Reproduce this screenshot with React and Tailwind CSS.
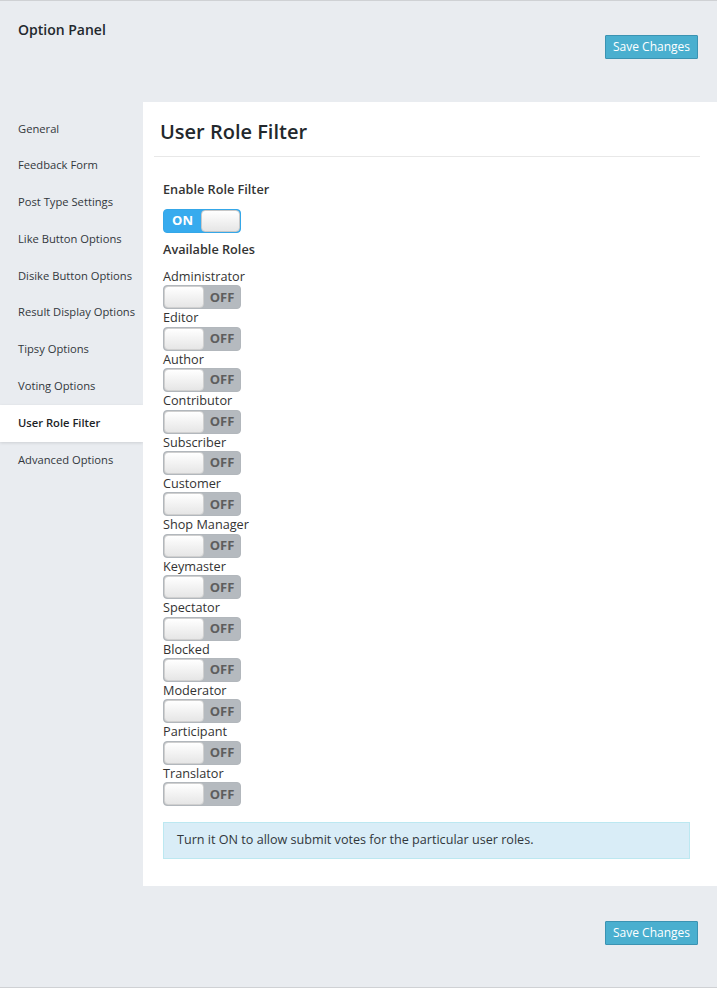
import React from 'react';

const menu = [
    'General',
    'Feedback Form',
    'Post Type Settings',
    'Like Button Options',
    'Disike Button Options',
    'Result Display Options',
    'Tipsy Options',
    'Voting Options',
    'User Role Filter',
    'Advanced Options',
];

const roles = [
    'Administrator',
    'Editor',
    'Author',
    'Contributor',
    'Subscriber',
    'Customer',
    'Shop Manager',
    'Keymaster',
    'Spectator',
    'Blocked',
    'Moderator',
    'Participant',
    'Translator',
];

const Toggle = ({ on }) => (
    <div
        className={`flex h-[24px] w-[78px] items-stretch overflow-hidden rounded-[4px] border ${
            on ? 'border-[#35a7e8] bg-[#37abee]' : 'border-[#b2b7bc] bg-[#b5babf]'
        }`}
    >
        {on ? (
            <>
                <span className="flex w-[37px] items-center justify-center text-[13px] font-bold text-white">ON</span>
                <span className="flex-1 rounded-[4px] border border-[#c8c8c8] bg-gradient-to-b from-white to-[#e6e6e6]" />
            </>
        ) : (
            <>
                <span className="w-[40px] rounded-[4px] border border-[#d0d0d0] bg-gradient-to-b from-white to-[#e6e6e6]" />
                <span className="flex flex-1 items-center justify-center text-[13px] font-bold text-[#5e5e5e]">OFF</span>
            </>
        )}
    </div>
);

const SaveButton = () => (
    <button className="block h-[24px] w-[93px] rounded-[1px] border border-[#3b93b2] bg-[#4aafcf] text-[12px] leading-[22px] text-white">
        Save Changes
    </button>
);

export default function App() {
    return (
        <div
            className="flex h-[988px] flex-col border-y border-[#cfd1d4] bg-[#e9ecf0] text-[#23282d]"
            style={{ fontFamily: '"Open Sans", "Noto Sans", sans-serif' }}
        >
            <div className="flex h-[101px] items-start justify-between pl-[18px] pr-[19px]">
                <h1 className="mt-[19px] text-[14px] font-semibold leading-[20px]">Option Panel</h1>
                <div className="mt-[34px] flex">
                    <SaveButton />
                </div>
            </div>

            <div className="flex h-[784px]">
                <ul className="w-[143px] pt-[8.5px]">
                    {menu.map((item) => {
                        const active = item === 'User Role Filter';
                        return (
                            <li
                                key={item}
                                className={`flex h-[36.8px] items-center pl-[18px] text-[11.2px] ${
                                    active ? 'bg-white font-semibold text-[#1d2327] shadow-[0_1px_3px_rgba(0,0,0,0.12)]' : 'text-[#32373c]'
                                }`}
                            >
                                {item}
                            </li>
                        );
                    })}
                </ul>

                <div className="flex-1 bg-white pl-[11px] pr-[17px]">
                    <h2 className="border-b border-[#e8e8e8] pb-[10px] pl-[6px] pt-[16px] text-[20px] font-semibold leading-[28px]">
                        User Role Filter
                    </h2>

                    <div className="pl-[9px]">
                        <p className="mt-[22px] text-[12.7px] font-semibold leading-[20px] text-[#333]">Enable Role Filter</p>
                        <div className="mt-[10px]">
                            <Toggle on />
                        </div>
                        <p className="mt-[6px] text-[12.7px] font-semibold leading-[20px] text-[#333]">Available Roles</p>

                        <div className="mt-[9px] flex flex-col">
                            {roles.map((role) => (
                                <div key={role}>
                                    <p className="text-[12.7px] leading-[17.4px] text-[#333]">{role}</p>
                                    <Toggle />
                                </div>
                            ))}
                        </div>

                        <div className="mr-[10px] mt-[16px] flex h-[37px] items-center border border-[#bce8f1] bg-[#d9edf7] pl-[13px] text-[12.6px] text-[#31373c]">
                            Turn it ON to allow submit votes for the particular user roles.
                        </div>
                    </div>
                </div>
            </div>

            <div className="flex flex-1 items-start justify-end pr-[19px] pt-[35px]">
                <SaveButton />
            </div>
        </div>
    );
}
